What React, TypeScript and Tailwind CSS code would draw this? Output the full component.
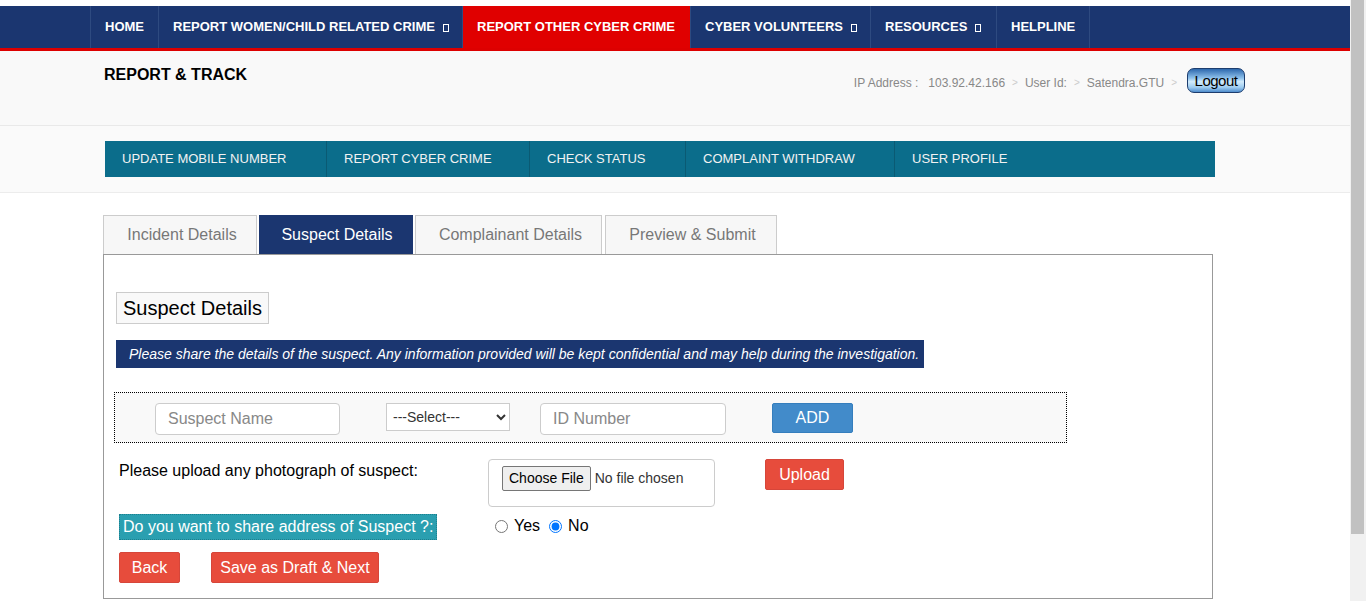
import React from "react";

const font = { fontFamily: '"Liberation Sans", Arial, sans-serif' };

function Caret() {
  return <span className="ml-[8px] inline-block h-[8px] w-[6px] translate-y-[1px] border border-white" />;
}

const topMenu = [
  { label: "HOME", w: "w-[68px]" },
  { label: "REPORT WOMEN/CHILD RELATED CRIME", w: "w-[304px]", caret: true },
  { label: "REPORT OTHER CYBER CRIME", w: "w-[228px]", active: true },
  { label: "CYBER VOLUNTEERS", w: "w-[180px]", caret: true },
  { label: "RESOURCES", w: "w-[126px]", caret: true },
  { label: "HELPLINE", w: "w-[93px]" },
];

const subMenu = [
  { label: "UPDATE MOBILE NUMBER", w: "w-[222px]" },
  { label: "REPORT CYBER CRIME", w: "w-[203px]" },
  { label: "CHECK STATUS", w: "w-[156px]" },
  { label: "COMPLAINT WITHDRAW", w: "w-[209px]" },
  { label: "USER PROFILE", w: "w-[150px]", last: true },
];

const tabs = [
  { label: "Incident Details", w: "w-[154px] pl-[4px]" },
  { label: "Suspect Details", w: "w-[154px] ml-[2px] pl-[2px]", active: true },
  { label: "Complainant Details", w: "w-[187px] ml-[2px] pl-[4px]" },
  { label: "Preview & Submit", w: "w-[172px] ml-[3px] pl-[3px]" },
];

function TopNav() {
  return (
    <nav className="flex h-[45px] border-b-[3px] border-[#dd0000] bg-[#1b3670] pl-[90px]">
      {topMenu.map((m) => (
        <div
          key={m.label}
          className={`flex h-full items-center border-l border-[#2e4a80] pl-[14px] text-[13px] font-bold text-white ${m.w} ${
            m.active ? "bg-[#e00000]" : ""
          }`}
        >
          {m.label}
          {m.caret ? <Caret /> : null}
        </div>
      ))}
      <div className="h-full border-l border-[#2e4a80]" />
    </nav>
  );
}

function Header() {
  return (
    <header className="flex h-[75px] items-start justify-between border-b border-[#e9e9e9] bg-[#f9f9f9] pl-[104px] pr-[105px]">
      <h1 className="pt-[12px] text-[16px] font-bold text-black">REPORT &amp; TRACK</h1>
      <div className="flex items-center pt-[19px] text-[12px] text-[#888]">
        <span>IP Address :</span>
        <span className="ml-[10px]">103.92.42.166</span>
        <span className="mx-[7px] text-[10px] text-[#ccc]">&gt;</span>
        <span>User Id:</span>
        <span className="mx-[7px] text-[10px] text-[#ccc]">&gt;</span>
        <span>Satendra.GTU</span>
        <span className="ml-[7px] mr-[10px] text-[10px] text-[#ccc]">&gt;</span>
        <button className="h-[25px] w-[58px] -translate-y-[2px] rounded-[7px] border-[1.5px] border-[#1d3d6e] bg-[linear-gradient(to_bottom,#2d68ad_0%,#8fc2ec_40%,#d2ebfb_55%,#9ccbf0_80%,#4f8ccc_100%)] text-[15px] leading-none tracking-[-0.5px] text-black">
          Logout
        </button>
      </div>
    </header>
  );
}

function SubNav() {
  return (
    <div className="h-[67px] border-b border-[#ececec] bg-[#fafafa] pl-[105px] pt-[15px]">
      <div className="flex h-[36px] w-[1110px] bg-[#0b6d8b]">
        {subMenu.map((m) => (
          <div
            key={m.label}
            className={`flex h-full items-center pl-[17px] text-[13px] text-[#f2f2f2] ${m.w} ${
              m.last ? "" : "border-r border-[#0a5a73]"
            }`}
          >
            {m.label}
          </div>
        ))}
      </div>
    </div>
  );
}

function Button({ children, className = "" }: { children: React.ReactNode; className?: string }) {
  return (
    <button
      className={`h-[31px] rounded-[2px] border border-[#d6463a] bg-[#e74c3c] text-[16px] text-white ${className}`}
    >
      {children}
    </button>
  );
}

function SuspectPanel() {
  return (
    <div className="h-[345px] w-[1110px] border border-[#999] bg-white">
      <div className="ml-[12px] mt-[37px] inline-block border border-[#ccc] bg-[#f9f9f9] px-[6px] py-[3px] text-[20px] leading-[24px] text-black">
        Suspect Details
      </div>
      <div className="ml-[12px] mt-[16px] flex h-[28px] w-fit items-center bg-[#1b3670] pl-[13px] pr-[5px] text-[14px] italic text-white">
        Please share the details of the suspect. Any information provided will be kept confidential and may help during
        the investigation.
      </div>
      <div className="ml-[10px] mt-[24px] flex h-[51px] w-[953px] items-start border border-dotted border-black bg-[#f9f9f9] pt-[10px]">
        <input
          placeholder="Suspect Name"
          className="ml-[40px] h-[32px] w-[185px] rounded-[4px] border border-[#ccc] bg-white px-[12px] text-[16px] text-[#555] placeholder:text-[#888]"
        />
        <select className="ml-[46px] h-[28px] w-[124px] border border-[#ccc] bg-white pl-[2px] text-[14px] text-[#333]">
          <option>---Select---</option>
        </select>
        <input
          placeholder="ID Number"
          className="ml-[30px] h-[32px] w-[186px] rounded-[4px] border border-[#ccc] bg-white px-[12px] text-[16px] text-[#555] placeholder:text-[#888]"
        />
        <button className="ml-[46px] h-[30px] w-[81px] rounded-[2px] border border-[#357ebd] bg-[#428bca] text-[16px] text-white">
          ADD
        </button>
      </div>
      <div className="ml-[15px] mt-[16px] flex items-start">
        <div className="w-[369px] text-[16px] text-black">Please upload any photograph of suspect:</div>
        <div className="h-[48px] w-[227px] rounded-[4px] border border-[#ccc] bg-white pl-[13px] pt-[6px]">
          <input type="file" className="w-[210px] text-[14px] text-[#333] file:mr-[4px] file:rounded-[2px] file:border file:border-[#767676] file:bg-[#efefef] file:px-[6px] file:py-[1px] file:text-[14px] file:text-black" />
        </div>
        <Button className="ml-[50px] w-[79px]">Upload</Button>
      </div>
      <div className="ml-[15px] mt-[7px] flex items-start">
        <div className="h-[26px] w-[318px] border border-dotted border-[#1d7f8e] bg-[#2a9fb0] pl-[3px] text-[16px] leading-[24px] text-white">
          Do you want to share address of Suspect ?:
        </div>
        <div className="ml-[58px] flex items-center text-[16px] text-black">
          <input type="radio" name="addr" className="h-[13px] w-[13px]" />
          <span className="ml-[6px]">Yes</span>
          <input type="radio" name="addr" defaultChecked className="ml-[9px] h-[13px] w-[13px]" />
          <span className="ml-[6px]">No</span>
        </div>
      </div>
      <div className="ml-[15px] mt-[12px] flex gap-[31px]">
        <Button className="w-[61px]">Back</Button>
        <Button className="w-[168px]">Save as Draft &amp; Next</Button>
      </div>
    </div>
  );
}

export default function App() {
  return (
    <div className="flex h-[601px] overflow-hidden bg-white" style={font}>
      <div className="flex-1">
        <div className="h-[6px] bg-white" />
        <TopNav />
        <Header />
        <SubNav />
        <main className="pl-[103px] pt-[22px]">
          <div className="flex">
            {tabs.map((t) => (
              <div
                key={t.label}
                className={`flex h-[39px] items-center justify-center border border-b-0 text-[16px] ${t.w} ${
                  t.active
                    ? "border-[#1b3670] bg-[#1b3670] text-white"
                    : "border-[#ccc] bg-[#f7f7f7] text-[#777]"
                }`}
              >
                {t.label}
              </div>
            ))}
          </div>
          <SuspectPanel />
        </main>
      </div>
      <div className="flex w-[16px] flex-col bg-[#f1f1f1] pl-[1px] pr-[2px]">
        <div className="h-[534px] bg-[#c1c1c1]" />
      </div>
    </div>
  );
}
